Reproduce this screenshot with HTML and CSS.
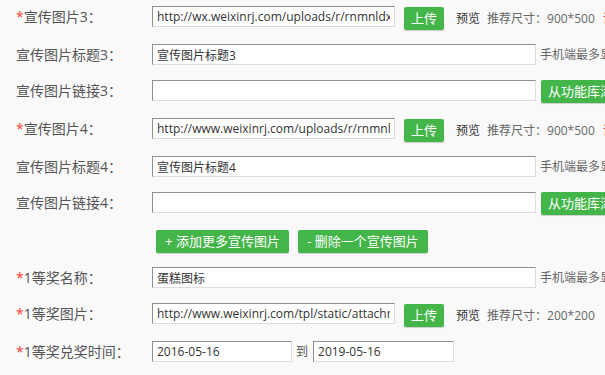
FILE: index.html
```html
<!DOCTYPE html>
<html lang="zh-CN">
<head>
<meta charset="utf-8">
<title>宣传图片设置</title>
<link rel="stylesheet" href="styles.css">
</head>
<body>
<div class="form">
  <div class="row up-row">
    <label class="lbl"><span class="req">*</span>宣传图片3：</label>
    <input class="ipt w-up" type="text" value="http://wx.weixinrj.com/uploads/r/rnmnldxbkr/b/5/3/1/thumb_5720b1c2e6d05.jpg">
    <button class="btn btn-up">上传</button>
    <span class="pv">预览</span>
    <span class="tip">推荐尺寸：900*500</span>
    <span class="warn">请上传jpg格式图片</span>
  </div>
  <div class="row">
    <label class="lbl">宣传图片标题3：</label>
    <input class="ipt w-long" type="text" value="宣传图片标题3">
    <span class="note">手机端最多显示10个字</span>
  </div>
  <div class="row">
    <label class="lbl">宣传图片链接3：</label>
    <input class="ipt w-long" type="text" value="">
    <button class="btn btn-lib">从功能库添加</button>
  </div>
  <div class="row up-row">
    <label class="lbl"><span class="req">*</span>宣传图片4：</label>
    <input class="ipt w-up" type="text" value="http://www.weixinrj.com/uploads/r/rnmnldxbkr/c/8/2/a/thumb_5720b1c2e6d05.jpg">
    <button class="btn btn-up">上传</button>
    <span class="pv">预览</span>
    <span class="tip">推荐尺寸：900*500</span>
    <span class="warn">请上传jpg格式图片</span>
  </div>
  <div class="row">
    <label class="lbl">宣传图片标题4：</label>
    <input class="ipt w-long" type="text" value="宣传图片标题4">
    <span class="note">手机端最多显示10个字</span>
  </div>
  <div class="row">
    <label class="lbl">宣传图片链接4：</label>
    <input class="ipt w-long" type="text" value="">
    <button class="btn btn-lib">从功能库添加</button>
  </div>
  <div class="row btn-row">
    <span class="lbl"></span>
    <button class="btn btn-add">+ 添加更多宣传图片</button>
    <button class="btn btn-del">- 删除一个宣传图片</button>
  </div>
  <div class="row">
    <label class="lbl"><span class="req">*</span>1等奖名称：</label>
    <input class="ipt w-long" type="text" value="蛋糕图标">
    <span class="note">手机端最多显示10个字</span>
  </div>
  <div class="row up-row">
    <label class="lbl"><span class="req">*</span>1等奖图片：</label>
    <input class="ipt w-up" type="text" value="http://www.weixinrj.com/tpl/static/attachment/icon/prize1.png">
    <button class="btn btn-up">上传</button>
    <span class="pv">预览</span>
    <span class="tip">推荐尺寸：200*200</span>
  </div>
  <div class="row">
    <label class="lbl"><span class="req">*</span>1等奖兑奖时间：</label>
    <input class="ipt w-date" type="text" value="2016-05-16">
    <span class="to">到</span>
    <input class="ipt w-date2" type="text" value="2019-05-16">
  </div>
</div>
</body>
</html>
```

FILE: styles.css
```css
html, body {
  margin: 0;
  padding: 0;
}
body {
  background: #f9f9f9;
  width: 605px;
  height: 375px;
  overflow: hidden;
  font-family: "Open Sans", "Noto Sans CJK SC", sans-serif;
  color: #555;
}
.form {
  padding: 6px 0 0 16px;
}
.row {
  display: flex;
  align-items: flex-start;
  white-space: nowrap;
  margin-bottom: 15px;
}
.row > * {
  flex-shrink: 0;
}
.row.up-row,
.row.btn-row {
  margin-bottom: 14px;
}
.lbl {
  flex: 0 0 136px;
  width: 136px;
  font-size: 14px;
  line-height: 21px;
  color: #555;
}
.req {
  color: #ff3b30;
}
.ipt {
  box-sizing: border-box;
  height: 21px;
  margin: 0;
  padding: 0 4px;
  background: #fff;
  border: 1px solid;
  border-color: #8f8f8f #dcdcdc #dcdcdc #8f8f8f;
  font-family: "Open Sans", "Noto Sans CJK SC", sans-serif;
  font-size: 12px;
  color: #333;
  outline: none;
}
.w-up { width: 243px; }
.w-long { width: 384px; }
.w-date { width: 140px; }
.w-date2 { width: 141px; }
.btn {
  box-sizing: border-box;
  height: 23px;
  margin: 0;
  padding: 0 7px;
  border: none;
  border-radius: 2px;
  background: #44b549;
  color: #fff;
  font-family: "Open Sans", "Noto Sans CJK SC", sans-serif;
  font-size: 13px;
  line-height: 23px;
  box-shadow: 0 1px 1px rgba(0, 0, 0, 0.18);
  cursor: pointer;
}
.btn-up {
  width: 40px;
  padding: 0;
  margin: 1px 0 0 9px;
}
.btn-lib {
  margin-left: 5px;
}
.btn-add {
  width: 133px;
  margin-left: 4px;
}
.btn-del {
  width: 130px;
  margin-left: 9px;
}
.pv {
  margin: 1px 0 0 12px;
  font-size: 12px;
  line-height: 23px;
  color: #333;
}
.tip {
  margin: 1px 0 0 7px;
  font-size: 12px;
  line-height: 23px;
  color: #666;
}
.warn {
  margin: 1px 0 0 8px;
  font-size: 12px;
  line-height: 23px;
  color: #e4393c;
}
.note {
  margin-left: 4px;
  font-size: 12px;
  line-height: 21px;
  color: #666;
}
.to {
  margin: 0 5px 0 4px;
  font-size: 12px;
  line-height: 21px;
  color: #555;
}
```
